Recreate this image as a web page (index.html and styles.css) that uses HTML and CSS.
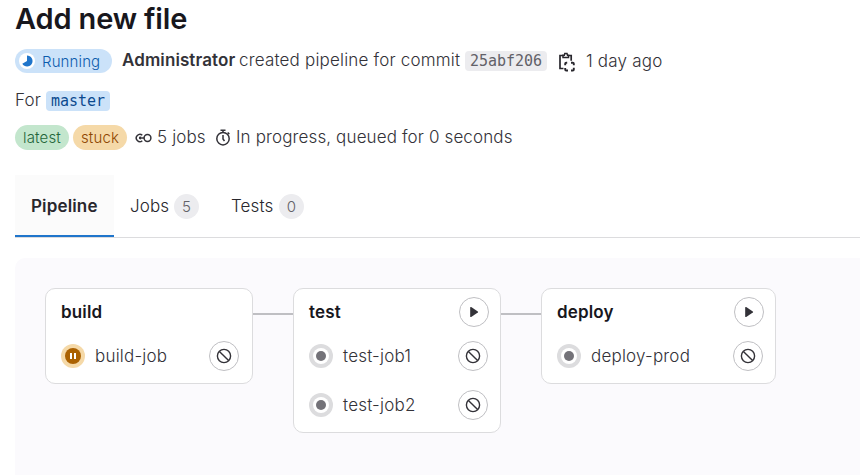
FILE: index.html
```html
<!DOCTYPE html>
<html lang="en">
<head>
<meta charset="utf-8">
<title>Add new file</title>
<link rel="stylesheet" href="styles.css">
</head>
<body>
<svg width="0" height="0" class="defs">
  <symbol id="cancel" viewBox="0 0 16 16"><circle cx="8" cy="8" r="6.600" fill="none" stroke="currentColor" stroke-width="1.400"/><path d="M3.400 3.400l9.200 9.200" stroke="currentColor" stroke-width="1.400"/></symbol>
  <symbol id="play" viewBox="0 0 16 16"><path d="M4.200 3.600v8.800c0 .6.5.8 1 .5l6.600-4.400c.4-.3.4-.7 0-1L5.200 3.100c-.5-.3-1-.1-1 .5z" fill="currentColor"/></symbol>
  <symbol id="created" viewBox="0 0 24 24"><circle cx="12" cy="12" r="12" fill="#dcdcde"/><circle cx="12" cy="12" r="8" fill="#fff"/><circle cx="12" cy="12" r="5" fill="#737278"/></symbol>
</svg>
<header class="header">
  <h1 class="title">Add new file</h1>
  <div class="row summary">
    <span class="status"><svg width="16" height="16" viewBox="0 0 16 16"><circle cx="8" cy="8" r="8" fill="#fff"/><path d="M8 2.500a5.500 5.500 0 1 1-4.700 8.300L8 8z" fill="#1f75cb"/></svg><span>Running</span></span>
    <strong class="author">Administrator</strong>
    <span class="created-text">created pipeline for commit</span>
    <code class="commit">25abf206</code>
    <svg class="copy" width="18" height="20" viewBox="0 0 18 20" fill="none" stroke="#28272d" stroke-width="1.700"><path d="M5 3.500H2v13h3.500M10.500 3.500h2.700v5.200"/><path d="M5 3.200h1.300l.5-1.700h2.200l.5 1.700h1v2.300H5z" stroke-width="1.500"/><path d="M7.200 13.300v-1.500q0-1 1-1h1M13 10.800h1.800q1 0 1 1v1.500M15.800 15.700v1.800q0 1-1 1H13M10 18.500H8.200q-1 0-1-1v-1.500" stroke-width="1.900"/></svg>
    <span class="ago">1 day ago</span>
  </div>
  <div class="row ref"><span class="for">For</span><code class="branch">master</code></div>
  <div class="row meta">
    <span class="badge latest">latest</span><span class="badge stuck">stuck</span>
    <svg class="jobs-icon" width="17" height="16" viewBox="0 0 17 16" fill="none" stroke="#333238" stroke-width="1.500"><path d="M7.300 5.300A3.600 3.600 0 1 0 7.300 10.700M6.500 8H9"/><circle cx="5.300" cy="8" r=".7" fill="#333238"/><circle cx="12.500" cy="8" r="3.400"/></svg>
    <span class="jobs-count">5 jobs</span>
    <svg class="timer" width="16" height="18" viewBox="0 0 16 18" fill="none" stroke="#333238" stroke-width="1.500"><circle cx="8" cy="10.700" r="6.200"/><path d="M5.500 2.200h5M8 2.500v2M12.700 4.500l1.600 1.600M8 7v4l1.500 2"/></svg>
    <span class="progress">In progress, queued for 0 seconds</span>
  </div>
</header>
<nav class="tabs">
  <a class="tab active">Pipeline</a>
  <a class="tab jobs"><span class="t-jobs">Jobs</span><span class="count">5</span></a>
  <a class="tab tests"><span class="t-tests">Tests</span><span class="count">0</span></a>
</nav>
<main class="graph">
  <section class="stage build">
    <div class="stage-head"><h2>build</h2></div>
    <div class="job"><svg width="24" height="24" viewBox="0 0 24 24"><circle cx="12" cy="12" r="12" fill="#f5d9a8"/><circle cx="12" cy="12" r="8" fill="#ab6100"/><path d="M9 9h2v6H9zM13 9h2v6h-2z" fill="#fff"/></svg><span class="name">build-job</span><button class="action" aria-label="Cancel"><svg width="16" height="16"><use href="#cancel"/></svg></button></div>
  </section>
  <div class="link"></div>
  <section class="stage">
    <div class="stage-head"><h2>test</h2><button class="action" aria-label="Run"><svg width="16" height="16"><use href="#play"/></svg></button></div>
    <div class="job"><svg width="24" height="24"><use href="#created"/></svg><span class="name">test-job1</span><button class="action" aria-label="Cancel"><svg width="16" height="16"><use href="#cancel"/></svg></button></div>
    <div class="job"><svg width="24" height="24"><use href="#created"/></svg><span class="name">test-job2</span><button class="action" aria-label="Cancel"><svg width="16" height="16"><use href="#cancel"/></svg></button></div>
  </section>
  <div class="link"></div>
  <section class="stage wide">
    <div class="stage-head"><h2>deploy</h2><button class="action" aria-label="Run"><svg width="16" height="16"><use href="#play"/></svg></button></div>
    <div class="job"><svg width="24" height="24"><use href="#created"/></svg><span class="name">deploy-prod</span><button class="action" aria-label="Cancel"><svg width="16" height="16"><use href="#cancel"/></svg></button></div>
  </section>
</main>
</body>
</html>
```
FILE: styles.css
```css
* { box-sizing: border-box; }
body { margin: 0; width: 860px; height: 475px; overflow: hidden; background: #fff; color: #333238; font: 350 17px/24px Inter, "Liberation Sans", sans-serif; letter-spacing: 0.13px; }
.defs { display: none; }
svg { display: block; flex: none; }
.header { height: 175px; padding-left: 15px; }
.title { margin: 0; height: 44px; padding-top: 1px; font-size: 29px; line-height: 36px; font-weight: 600; letter-spacing: -0.15px; color: #18171d; white-space: nowrap; }
.row { display: flex; align-items: center; white-space: nowrap; }
.summary { height: 34px; }
.status { display: flex; align-items: center; width: 97px; height: 24px; padding-left: 4px; border-radius: 12px; background: #cbe2f9; color: #0b5cad; font-size: 15px; }
.status svg { margin-right: 7px; }
.status span { padding-top: 1px; }
.author { width: 118px; margin: -2px 0 0 9px; padding-left: 1px; font-weight: 600; letter-spacing: 0.1px; }
.created-text { width: 226px; margin-top: -2px; letter-spacing: 0.19px; }
code { display: block; height: 20px; border-radius: 4px; font: 400 15px/20px "DejaVu Sans Mono", "Liberation Mono", monospace; letter-spacing: 0; text-align: center; }
.commit { width: 82px; background: #ececef; color: #626168; }
.copy { margin: 2px 0 0 11px; }
.ago { margin-left: 10px; letter-spacing: 0.2px; }
.ref { height: 44px; }
.for { width: 31px; }
.branch { width: 64px; background: #cbe2f9; color: #0b4a8f; margin-top: 2px; }
.meta { height: 30px; }
.badge { height: 25px; border-radius: 13px; font-size: 15px; line-height: 26px; text-align: center; width: 54px; }
.latest { background: #c3e6cd; color: #24663b; margin-right: 4px; }
.stuck { background: #f5d9a8; color: #8f4700; }
.jobs-icon { margin: 1px 5px 0 8px; }
.jobs-count { width: 58px; }
.timer { margin-right: 5px; }
.tabs { display: flex; margin-left: 15px; height: 63px; border-bottom: 1px solid #dcdcde; color: #28272d; }
.tab { display: flex; align-items: center; height: 62px; white-space: nowrap; }
.active { width: 99px; padding-left: 16px; background: #fbfbfb; box-shadow: inset 0 -2px #1f75cb; font-weight: 600; letter-spacing: 0.15px; }
.jobs { margin-left: 16px; width: 101px; }
.t-jobs { width: 44px; }
.t-tests { width: 48px; }
.count { width: 25px; height: 25px; border-radius: 50%; background: #ececef; color: #626168; font-size: 15px; line-height: 25px; text-align: center; }
.graph { display: flex; align-items: flex-start; margin: 20px 0 0 15px; height: 217px; padding: 30px 0 0 30px; background: #fbfafd; border-radius: 10px 0 0; }
.stage { width: 208px; padding-bottom: 3px; border: 1px solid #dcdcde; border-radius: 10px; background: #fff; }
.wide { width: 235px; }
.stage-head { display: flex; align-items: center; justify-content: space-between; height: 43px; padding: 3px 11px 0 15px; }
h2 { margin: 0; font-size: 17px; line-height: 24px; font-weight: 600; letter-spacing: 0.15px; color: #18171d; }
.job { display: flex; align-items: center; height: 48px; padding: 0 12px 0 15px; white-space: nowrap; }
.build .job { padding-right: 13px; }
.job + .job { height: 49px; padding-top: 1px; }
.name { margin-left: 10px; letter-spacing: 0.2px; }
.action { display: flex; align-items: center; justify-content: center; width: 30px; height: 30px; margin: 0 0 0 auto; padding: 0; border: 1px solid #bfbfc3; border-radius: 50%; background: #fff; color: #333238; }
.stage-head .action { margin-top: -1px; }
.link { width: 40px; height: 2px; margin-top: 25px; background: #bfbfc3; }
```
